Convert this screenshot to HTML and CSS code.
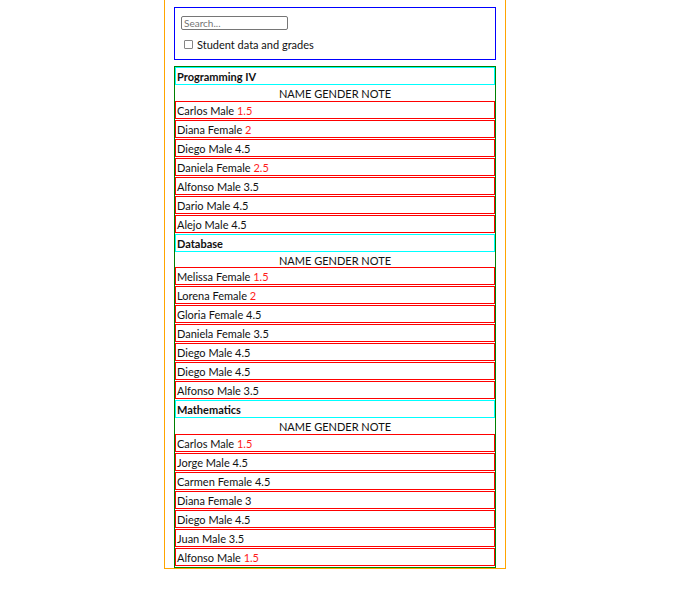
FILE: index.html
```html
<!DOCTYPE html>
<html lang="en">
<head>
<meta charset="utf-8">
<title>Students</title>
<link rel="stylesheet" href="styles.css">
</head>
<body>
<div class="page">
  <div class="filters">
    <input class="search" type="text" placeholder="Search...">
    <label class="check"><input class="box" type="checkbox"><span>Student data and grades</span></label>
  </div>
  <div class="courses">
    <div class="course">Programming IV</div>
    <div class="head">NAME GENDER NOTE</div>
    <div class="row">Carlos Male <span class="low">1.5</span></div>
    <div class="row">Diana Female <span class="low">2</span></div>
    <div class="row">Diego Male 4.5</div>
    <div class="row">Daniela Female <span class="low">2.5</span></div>
    <div class="row">Alfonso Male 3.5</div>
    <div class="row">Dario Male 4.5</div>
    <div class="row">Alejo Male 4.5</div>
    <div class="course">Database</div>
    <div class="head">NAME GENDER NOTE</div>
    <div class="row">Melissa Female <span class="low">1.5</span></div>
    <div class="row">Lorena Female <span class="low">2</span></div>
    <div class="row">Gloria Female 4.5</div>
    <div class="row">Daniela Female 3.5</div>
    <div class="row">Diego Male 4.5</div>
    <div class="row">Diego Male 4.5</div>
    <div class="row">Alfonso Male 3.5</div>
    <div class="course">Mathematics</div>
    <div class="head">NAME GENDER NOTE</div>
    <div class="row">Carlos Male <span class="low">1.5</span></div>
    <div class="row">Jorge Male 4.5</div>
    <div class="row">Carmen Female 4.5</div>
    <div class="row">Diana Female 3</div>
    <div class="row">Diego Male 4.5</div>
    <div class="row">Juan Male 3.5</div>
    <div class="row">Alfonso Male <span class="low">1.5</span></div>
  </div>
</div>
</body>
</html>
```
FILE: styles.css
```css
html, body {
  margin: 0;
  padding: 0;
  background: #fff;
}
body {
  font-family: Lato, "Open Sans", sans-serif;
  font-size: 11px;
  line-height: 15.96px;
  color: #111;
}
.page {
  margin-left: 164px;
  width: 322px;
  padding: 7px 9px 0 9px;
  border: 1px solid #ffa500;
  border-top: none;
}
.filters {
  border: 1px solid #0000ff;
  padding: 8px 0 0 6px;
  box-sizing: border-box;
  height: 53px;
  display: flex;
  flex-direction: column;
  align-items: flex-start;
}
.search {
  box-sizing: border-box;
  width: 107px;
  height: 14px;
  margin: 0;
  padding: 0 2px;
  border: 1px solid #767676;
  border-radius: 2px;
  font-family: Lato, sans-serif;
  font-size: 10px;
  line-height: 12px;
}
.search::placeholder {
  color: #757575;
}
.check {
  display: flex;
  align-items: center;
  height: 13px;
  line-height: 13px;
  margin-top: 8px;
  margin-left: 3px;
}
.box {
  appearance: none;
  -webkit-appearance: none;
  width: 9px;
  height: 9px;
  margin: 0 4px 0 0;
  border: 1px solid #858585;
  border-radius: 1px;
  background: #fff;
  box-sizing: border-box;
}
.courses {
  margin-top: 6px;
  border: 1px solid #008000;
}
.course,
.head,
.row {
  padding-top: 2px;
  line-height: 13.96px;
}
.course {
  border: 1px solid #00ffff;
  font-weight: bold;
  padding-left: 1px;
}
.head {
  text-align: center;
}
.row {
  border: 1px solid #ff0000;
  margin-bottom: 1px;
  padding-left: 1px;
}
.low {
  color: #ff1a1a;
}
```
